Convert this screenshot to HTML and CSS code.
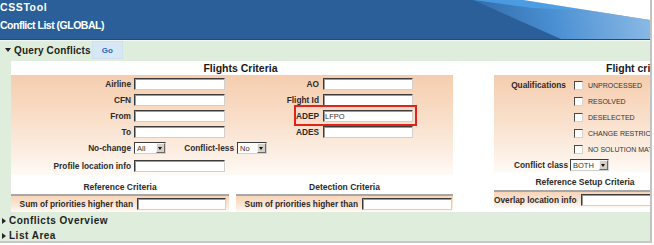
FILE: index.html
```html
<!DOCTYPE html>
<html lang="en">
<head>
    <meta charset="UTF-8">
    <title>CSSTool - Conflict List</title>
    <link rel="stylesheet" href="styles.css">
</head>
<body>
    <div class="page">
        <div class="topbar">
            <svg class="swoosh" width="177" height="39" viewBox="0 0 177 39">
                <defs>
                    <linearGradient id="band" gradientUnits="userSpaceOnUse" x1="0" y1="39" x2="177" y2="0">
                        <stop offset="0" stop-color="#2f68a6"/>
                        <stop offset="0.45" stop-color="#4a8fd2"/>
                        <stop offset="1" stop-color="#8dbbe6"/>
                    </linearGradient>
                </defs>
                <polygon points="0,0 50,0 177,20 177,39 88,39" fill="url(#band)"/>
                <polygon points="0,0 50,0 120,11 60,8" fill="#4ea3e8" opacity="0.8"/>
                <polygon points="50,0 177,0 177,20" fill="#ffffff"/>
            </svg>
            <div class="app-name">CSSTool</div>
            <div class="page-title">Conflict List (GLOBAL)</div>
        </div>

        <div class="content">
            <!-- Query Conflicts -->
            <div class="section-bar">
                <span class="caret down"></span>
                <span class="section-name">Query Conflicts</span>
                <button class="go">Go</button>
            </div>

            <div class="query-panel">
                <div class="criteria flights">
                    <div class="criteria-title">Flights Criteria</div>
                    <div class="criteria-body">
                        <div class="form-row">
                            <label class="lbl">Airline</label>
                            <input class="field w91" type="text">
                            <label class="lbl2">AO</label>
                            <input class="field w90" type="text">
                        </div>
                        <div class="form-row">
                            <label class="lbl">CFN</label>
                            <input class="field w91" type="text">
                            <label class="lbl2">Flight Id</label>
                            <input class="field w90" type="text">
                        </div>
                        <div class="form-row">
                            <label class="lbl">From</label>
                            <input class="field w91" type="text">
                            <label class="lbl2">ADEP</label>
                            <input class="field w90" type="text" value="LFPO">
                        </div>
                        <div class="form-row">
                            <label class="lbl">To</label>
                            <input class="field w91" type="text">
                            <label class="lbl2">ADES</label>
                            <input class="field w90" type="text">
                        </div>
                        <div class="form-row gap-after">
                            <label class="lbl">No-change</label>
                            <div class="select w32"><span>All</span><span class="arrow"></span></div>
                            <label class="lbl3">Conflict-less</label>
                            <div class="select w30"><span>No</span><span class="arrow"></span></div>
                        </div>
                        <div class="form-row">
                            <label class="lbl">Profile location info</label>
                            <input class="field w91" type="text">
                        </div>
                    </div>
                    <div class="sub-blocks">
                        <div class="sub-block ref">
                            <div class="sub-title">Reference Criteria</div>
                            <div class="sub-row">
                                <label>Sum of priorities higher than</label>
                                <input class="field w89" type="text">
                            </div>
                        </div>
                        <div class="sub-block det">
                            <div class="sub-title">Detection Criteria</div>
                            <div class="sub-row">
                                <label>Sum of priorities higher than</label>
                                <input class="field w90" type="text">
                            </div>
                        </div>
                    </div>
                </div>

                <div class="criteria flight">
                    <div class="criteria-title">Flight criteria</div>
                    <div class="criteria-body">
                        <div class="form-row">
                            <label class="lbl-q">Qualifications</label>
                            <span class="check"></span>
                            <span class="check-text">UNPROCESSED</span>
                        </div>
                        <div class="form-row">
                            <span class="lbl-q"></span>
                            <span class="check"></span>
                            <span class="check-text">RESOLVED</span>
                        </div>
                        <div class="form-row">
                            <span class="lbl-q"></span>
                            <span class="check"></span>
                            <span class="check-text">DESELECTED</span>
                        </div>
                        <div class="form-row">
                            <span class="lbl-q"></span>
                            <span class="check"></span>
                            <span class="check-text">CHANGE RESTRICTION</span>
                        </div>
                        <div class="form-row">
                            <span class="lbl-q"></span>
                            <span class="check"></span>
                            <span class="check-text">NO SOLUTION MATCHING</span>
                        </div>
                        <div class="form-row">
                            <label class="lbl-c">Conflict class</label>
                            <div class="select w39"><span>BOTH</span><span class="arrow"></span></div>
                        </div>
                    </div>
                    <div class="sub-block setup">
                        <div class="sub-title">Reference Setup Criteria</div>
                        <div class="sub-row">
                            <label>Overlap location info</label>
                            <input class="field w100" type="text">
                        </div>
                    </div>
                </div>

                <div class="highlight"></div>
            </div>

            <div class="section-bar collapsed">
                <span class="caret right"></span>
                <span class="section-name">Conflicts Overview</span>
            </div>
            <div class="section-bar collapsed last">
                <span class="caret right"></span>
                <span class="section-name">List Area</span>
            </div>
        </div>
    </div>
</body>
</html>
```

FILE: styles.css
```css
* {
    box-sizing: border-box;
    margin: 0;
    padding: 0;
}

body {
    background-color: #ffffff;
    font-family: 'Liberation Sans', Arial, sans-serif;
    color: #2b2b2b;
}

.page {
    width: 652px;
    height: 243px;
    border-right: 2px solid #c2c2c2;
    border-bottom: 2px solid #c6c6c6;
    overflow: hidden;
}

/* top banner */
.topbar {
    position: relative;
    height: 40px;
    background-color: #2a5f99;
    border-bottom: 1px solid #1c4c86;
    color: #ffffff;
    font-weight: bold;
}

.swoosh {
    position: absolute;
    top: 0;
    right: 0;
}

.app-name {
    padding-top: 1px;
    height: 19px;
    line-height: 13px;
    font-size: 10.5px;
    letter-spacing: 0.6px;
}

.page-title {
    line-height: 13px;
    font-size: 10.5px;
    letter-spacing: -0.5px;
}

.content {
    height: 201px;
    background-color: #dfeedc;
    border-top: 1px solid #f2f8f0;
}

/* collapsible section bars */
.section-bar {
    display: flex;
    align-items: center;
    height: 18px;
    font-weight: bold;
    font-size: 10px;
    color: #1e1e1e;
}

.section-bar .caret {
    width: 0;
    height: 0;
    margin-left: 5px;
    margin-right: 3px;
}

.caret.down {
    border-left: 3px solid transparent;
    border-right: 3px solid transparent;
    border-top: 4px solid #222;
}

.caret.right {
    margin-left: 2px;
    border-top: 3px solid transparent;
    border-bottom: 3px solid transparent;
    border-left: 4px solid #222;
}

.section-name {
    letter-spacing: 0.15px;
}

.section-bar.collapsed {
    height: 16px;
    padding-top: 1px;
}

.section-bar.collapsed .section-name {
    letter-spacing: 0.5px;
}

.section-bar.last {
    height: 13px;
    align-items: flex-start;
    padding-top: 2px;
}

.section-bar.last .caret {
    margin-top: 3px;
}

.go {
    width: 31px;
    height: 18px;
    margin-left: 1px;
    border: 1px solid #cfe0f0;
    background-color: #d8e7f6;
    color: #2a69b6;
    font-family: 'Liberation Sans', Arial, sans-serif;
    font-weight: bold;
    font-size: 8px;
}

/* query form */
.query-panel {
    position: relative;
    display: flex;
    height: 151px;
    margin-top: 2px;
    margin-left: 11px;
    background-color: #ffffff;
    overflow: hidden;
}

.criteria.flights {
    width: 459px;
    flex-shrink: 0;
}

.criteria.flight {
    width: 240px;
    flex-shrink: 0;
    margin-left: 24px;
}

.criteria-title {
    height: 14px;
    line-height: 14px;
    text-align: center;
    font-weight: bold;
    font-size: 10.5px;
    color: #1a1a1a;
}

.flight .criteria-title {
    text-align: left;
    padding-left: 112px;
}

.criteria-body {
    width: 442px;
    height: 100px;
    padding-top: 3px;
    background: linear-gradient(#f5cdae, #f9dfca 45%, #fcefe4 80%, #fffaf6);
}

.flight .criteria-body {
    width: auto;
    height: 97px;
    padding-top: 4px;
}

.form-row {
    display: flex;
    align-items: center;
    height: 12px;
    margin-bottom: 4px;
    font-size: 8.3px;
    font-weight: bold;
}

.form-row.gap-after {
    margin-bottom: 6px;
}

.lbl {
    width: 120px;
    margin-right: 3px;
    text-align: right;
}

.lbl2 {
    width: 94px;
    margin-right: 4px;
    text-align: right;
}

.lbl3 {
    width: 68px;
    margin-right: 3px;
    text-align: right;
}

.lbl-q {
    width: 72px;
    margin-right: 8px;
    text-align: right;
}

.lbl-c {
    width: 74px;
    margin-right: 2px;
    text-align: right;
}

.field {
    height: 12px;
    padding: 0 1px;
    border: 1px solid;
    border-color: #3c3c3c #d0d0d0 #d0d0d0 #3c3c3c;
    box-shadow: inset 1px 1px 0 #9a9a9a;
    background-color: #ffffff;
    font-family: 'Liberation Sans', Arial, sans-serif;
    font-size: 7.5px;
    color: #333;
    outline: none;
}

.w89 { width: 89px; }
.w90 { width: 90px; }
.w91 { width: 91px; }
.w100 { width: 100px; }
.w30 { width: 30px; }
.w32 { width: 32px; }
.w39 { width: 39px; }

.select {
    display: flex;
    align-items: center;
    justify-content: space-between;
    height: 12px;
    padding-left: 2px;
    border: 1px solid;
    border-color: #3c3c3c #d0d0d0 #d0d0d0 #3c3c3c;
    background-color: #ffffff;
    font-size: 7.5px;
    font-weight: normal;
    color: #333;
}

.select .arrow {
    position: relative;
    width: 9px;
    height: 10px;
    background-color: #d4d0c8;
    border: 1px solid;
    border-color: #f4f4f4 #6a6a6a #6a6a6a #f4f4f4;
}

.select .arrow::after {
    content: "";
    position: absolute;
    left: 1px;
    top: 3px;
    border-left: 2.5px solid transparent;
    border-right: 2.5px solid transparent;
    border-top: 3px solid #111;
}

.check {
    width: 9px;
    height: 9px;
    margin-right: 5px;
    border: 1px solid;
    border-color: #4a4a4a #d4d4d4 #d4d4d4 #4a4a4a;
    background-color: #ffffff;
}

.check-text {
    font-size: 7px;
    font-weight: normal;
    color: #333;
    white-space: nowrap;
}

/* criteria sub blocks */
.sub-blocks {
    display: flex;
    gap: 7px;
    padding-top: 6px;
}

.sub-block.ref {
    width: 218px;
}

.sub-block.det {
    width: 217px;
}

.sub-block.setup {
    width: 182px;
    padding-top: 4px;
}

.sub-title {
    height: 13px;
    line-height: 13px;
    text-align: center;
    font-weight: bold;
    font-size: 8.5px;
    color: #2b2b2b;
}

.setup .sub-title {
    height: 14px;
}

.sub-row {
    display: flex;
    align-items: center;
    justify-content: flex-end;
    height: 18px;
    padding-right: 3px;
    border-top: 2px solid #a7a7a7;
    background: linear-gradient(#f7d4b8, #fbe7d7 60%, #fffaf6);
    font-size: 8.3px;
    font-weight: bold;
}

.sub-row label {
    margin-right: 4px;
    white-space: nowrap;
}

.det .sub-row {
    padding-right: 1px;
}

.setup .sub-row {
    justify-content: flex-start;
    padding-right: 0;
}

.setup .sub-row label {
    width: 87px;
    text-align: right;
}

/* annotation around the ADEP field */
.highlight {
    position: absolute;
    left: 283px;
    top: 44px;
    width: 123px;
    height: 21px;
    border: 2px solid #e2231a;
}
```
